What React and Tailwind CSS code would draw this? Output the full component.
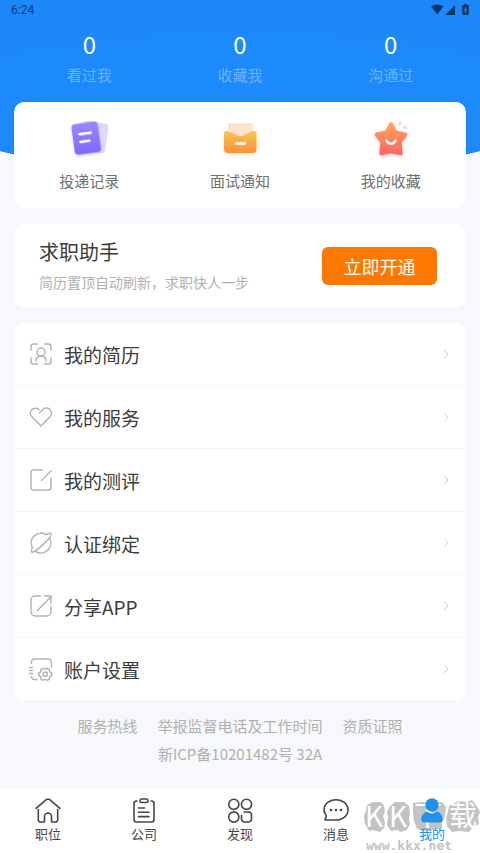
const stats = [
  { label: "看过我", value: 0 },
  { label: "收藏我", value: 0 },
  { label: "沟通过", value: 0 },
];

function RecordIcon() {
  return (
    <svg width="48" height="48" viewBox="0 0 48 48" fill="none">
      <defs>
        <linearGradient id="record" x1="0" y1="0" x2="0" y2="1">
          <stop offset="0" stopColor="#9b86ff" />
          <stop offset="1" stopColor="#7d6bfb" />
        </linearGradient>
        <filter id="recordShadow" x="-30%" y="-30%" width="160%" height="160%">
          <feDropShadow dx="0" dy="1.5" stdDeviation="1.5" floodColor="#8b78ff" floodOpacity="0.3" />
        </filter>
      </defs>
      <rect x="17" y="8" width="25" height="30" rx="4" fill="#dfd9ff" transform="rotate(8 28 24)" />
      <g transform="rotate(-8 22 24)" filter="url(#recordShadow)">
        <rect x="8" y="8.5" width="26.5" height="31" rx="4" fill="url(#record)" />
        <path d="M15 19.2h11.5M15 27h9" stroke="#fff" strokeWidth="2.4" strokeLinecap="round" />
      </g>
    </svg>
  );
}

function NoticeIcon() {
  return (
    <svg width="48" height="48" viewBox="0 0 48 48" fill="none">
      <defs>
        <linearGradient id="notice" x1="0" y1="0" x2="0" y2="1">
          <stop offset="0" stopColor="#fbc452" />
          <stop offset="1" stopColor="#f5943a" />
        </linearGradient>
        <filter id="noticeShadow" x="-30%" y="-30%" width="160%" height="160%">
          <feDropShadow dx="0" dy="1.5" stdDeviation="1.5" floodColor="#f5943a" floodOpacity="0.3" />
        </filter>
      </defs>
      <rect x="12" y="9" width="25" height="24" rx="2.5" fill="#fde3ca" />
      <path
        d="M8 19.700c0-2.200 1.800-3.200 3.700-2.400L22 21.500q2.500 1 5 0l9.800-4.200c1.900-.8 3.700.2 3.700 2.400V35a4 4 0 0 1-4 4H12a4 4 0 0 1-4-4z"
        fill="url(#notice)"
        filter="url(#noticeShadow)"
      />
      <path d="M20.500 29.500h8.500" stroke="#fff" strokeWidth="2.400" strokeLinecap="round" />
    </svg>
  );
}

function StarIcon() {
  return (
    <svg width="48" height="48" viewBox="0 0 48 48" fill="none">
      <defs>
        <linearGradient id="star" x1="0" y1="0" x2="0" y2="1">
          <stop offset="0" stopColor="#ffa95f" />
          <stop offset="1" stopColor="#ff6464" />
        </linearGradient>
        <filter id="starShadow" x="-30%" y="-30%" width="160%" height="160%">
          <feDropShadow dx="0" dy="1.5" stdDeviation="1.5" floodColor="#ff7a62" floodOpacity="0.3" />
        </filter>
      </defs>
      <path
        d="M22.300 9c.8-1.500 2.600-1.500 3.400 0l3.900 7.600 9.100 1.900c1.700.4 2.300 2.200 1.200 3.500l-5.100 6.600.9 10.300c.1 1.900-1.800 2.900-3.500 2.100L24 39.500 15.800 41c-1.700.8-3.600-.2-3.500-2.100l.9-10.300L8.100 22c-1.100-1.300-.5-3.100 1.200-3.500l9.100-1.900z"
        fill="url(#star)"
        filter="url(#starShadow)"
      />
      <path d="M19.500 26.500c2 4.300 7 4.300 9 0" stroke="#fff" strokeWidth="2.400" strokeLinecap="round" />
      <ellipse cx="33" cy="9.500" rx="1.700" ry="2.400" fill="#ffd8c8" transform="rotate(12 33 9.500)" />
      <ellipse cx="38" cy="13.500" rx="2.400" ry="1.600" fill="#ffd8c8" transform="rotate(15 38 13.500)" />
    </svg>
  );
}

const shortcuts = [
  { label: "投递记录", icon: <RecordIcon /> },
  { label: "面试通知", icon: <NoticeIcon /> },
  { label: "我的收藏", icon: <StarIcon /> },
];

const menu = [
  {
    label: "我的简历",
    icon: (
      <>
        <path d="M8.500 2H4.500A2.500 2.500 0 0 0 2 4.500V8M15.500 2h4A2.500 2.500 0 0 1 22 4.500V8M2 16v3.500A2.500 2.500 0 0 0 4.500 22h4M22 16v3.500a2.500 2.500 0 0 1-2.500 2.500h-4" />
        <circle cx="12" cy="10" r="4" />
        <path d="M6.800 18.800c.5-3 2.500-4.800 5.200-4.800s4.700 1.800 5.200 4.800" />
      </>
    ),
  },
  {
    label: "我的服务",
    icon: (
      <path d="M10.500 7.700 14 4.300c2-1.800 5.600-1.500 7.300.4 1.800 2.100 1.700 5.100-.3 7.100L12 21l-9.100-9.200C1 9.800.9 6.800 2.800 4.700 4.700 2.800 8 2.700 10 4.500" />
    ),
  },
  {
    label: "我的测评",
    icon: (
      <>
        <path d="M13.500 2h-9A2.500 2.500 0 0 0 2 4.500v15A2.500 2.500 0 0 0 4.500 22h15a2.500 2.500 0 0 0 2.500-2.500V10" />
        <path d="M12.500 12.500 22 3" />
      </>
    ),
  },
  {
    label: "认证绑定",
    icon: (
      <>
        <path d="M17.500 3.700A9.900 9.900 0 0 0 3.300 16.500M20.600 7.300A9.900 9.900 0 0 1 6.800 20.500" />
        <path d="M17.500 3.700c2.200-1.500 3.800-2 4.300-1.300 1.200 1.500-2.800 6.600-8 11.500-5.300 4.900-10.200 8.300-11.300 7.100-.5-.6 0-2.200.8-4.500" />
      </>
    ),
  },
  {
    label: "分享APP",
    icon: (
      <>
        <path d="M11.500 2H6a4 4 0 0 0-4 4v12a4 4 0 0 0 4 4h12a4 4 0 0 0 4-4v-5.500" />
        <path d="M8.500 16.500 22 2.500M15.500 2H22v7" />
      </>
    ),
  },
  {
    label: "账户设置",
    icon: (
      <>
        <path d="M2.500 6.500V5a3 3 0 0 1 3-3H19a3.500 3.500 0 0 1 3.500 3.500V10M2.500 19.500a3 3 0 0 0 3 3H8M.5 10.500h3M.5 13.500h3M.5 16.500h3" />
        <path d="m14.300 11.300 1.200.7h1.500l1.300-.9 2.200 1.300-.1 1.600.8 1.300 1.500.7v2.500l-1.500.7-.8 1.300.1 1.600-2.200 1.300-1.300-.9h-1.600l-1.300.9-2.200-1.300.1-1.600-.8-1.300-1.500-.7V16l1.500-.7.8-1.300-.1-1.600z" />
        <circle cx="16.200" cy="17.200" r="2.300" />
      </>
    ),
  },
];

const tabs = [
  {
    label: "职位",
    icon: (
      <>
        <path d="M2 11.300 12.300 2.700a2.600 2.600 0 0 1 3.400 0L26 11.300" />
        <path d="M4.300 12.500v10.200a2.300 2.300 0 0 0 2.300 2.300h3.900v-5.500a3.500 3.500 0 0 1 7 0V25h3.900a2.300 2.300 0 0 0 2.300-2.300V12.500" />
      </>
    ),
  },
  {
    label: "公司",
    icon: (
      <>
        <path d="M7 4h-.5A2.500 2.500 0 0 0 4 6.500v16A2.500 2.500 0 0 0 6.500 25h15a2.500 2.500 0 0 0 2.500-2.500v-16A2.500 2.500 0 0 0 21.500 4H21" />
        <rect x="10" y="2" width="8" height="3.500" rx="1.500" />
        <path d="M8.500 11h6M8.500 15.300h10.500M8.500 19.600h10.500" />
      </>
    ),
  },
  {
    label: "发现",
    icon: (
      <>
        <circle cx="7.800" cy="7.300" r="5.100" />
        <circle cx="20.500" cy="7.300" r="5.100" />
        <circle cx="7.800" cy="20" r="5.100" />
        <path d="M18 15h4.500a3 3 0 0 1 3 3v4a3 3 0 0 1-3 3h-4a3 3 0 0 1-3-3v-3.500" />
      </>
    ),
  },
  {
    label: "消息",
    icon: (
      <>
        <path d="M4.200 18.500A10.500 10.500 0 0 1 2 12.600C2 7 7.200 2.700 14 2.700S26 7 26 12.800 20.800 23 14 23H3.700c-.8 0-1-.8-.5-1.300.9-1 1.400-2 1-3.200z" />
        <path d="M9 13h.01M14 13h.01M19 13h.01" strokeWidth="2.600" />
      </>
    ),
  },
  {
    label: "我的",
    active: true,
    icon: (
      <g fill="#1e93ee" stroke="none">
        <circle cx="14" cy="8" r="6.700" />
        <path d="M9 14.500a8 8 0 0 0 10.300 0c3.300 1.300 5.400 4.300 5.400 7.800 0 2.200-1 3.200-3 3.200H6.300c-2 0-3-1-3-3.200 0-3.500 2.200-6.500 5.700-7.800z" />
      </g>
    ),
  },
];

function StatusBar() {
  return (
    <div className="flex h-5 items-center justify-between px-[11px] text-[#0c3a6e]">
      <span className="font-[Roboto] text-xs">6:24</span>
      <svg width="38" height="12" viewBox="0 0 38 12" fill="currentColor">
        <path d="M0 2.500C3.500-.3 9-.3 12.500 2.500L6.300 10.500z" />
        <path d="M14 11h10V1z" />
        <path
          fillRule="evenodd"
          d="M32 1h1V0h3v1h1q.8 0 .8.800v8.400q0 .8-.8.800h-5q-.8 0-.8-.800V1.800q0-.8.800-.8zm3 1.500-2.200 4h1.400V9.500l2-4h-1.200z"
        />
      </svg>
    </div>
  );
}

function Watermark() {
  return (
    <div className="pointer-events-none absolute right-0 bottom-0">
      <svg width="118" height="64" viewBox="0 -8 118 64">
        <g fill="#c3c3c3">
          <path d="M5 8l6-3 8 0 3 4 1 6-2 4 2 6-1 6-4 4-7-2-4 1-4-7-1-8 2-5z" />
          <path d="M28 9l5-4 9 0 5 4 1 8-1 4 1 6-3 6-6 2-4-2-6 1-4-6 1-8-1-5z" />
          <path d="M51 6l9-1 12 1 8-1 4 5-1 9-3 7 0 5-8 2-8 1-9-2-3-8-1-9z" />
          <path d="M87 9l6-3 3-2 9 1 5-2 4 5 4 7-2 5 1 7-6 3-4 5-10-1-7 1-5-6-1-9 2-5z" />
        </g>
        <g fill="#fff" fontFamily="'Noto Sans CJK SC', sans-serif">
          <text x="3" y="30" fontSize="28">K</text>
          <text x="27" y="30" fontSize="28">K</text>
          <text x="52" y="29" fontSize="28">下</text>
          <text x="87" y="29" fontSize="28">载</text>
        </g>
        <text
          x="4"
          y="53"
          fill="#c3c3c3"
          fontFamily="'DejaVu Sans Mono', monospace"
          fontSize="13"
          fontWeight="700"
        >
          www.kkx.net
        </text>
      </svg>
    </div>
  );
}

export default function App() {
  return (
    <div className="relative isolate flex min-h-screen flex-col bg-[#f7f8fb] font-['Noto_Sans_CJK_SC',sans-serif]">
      {/* Curved header background */}
      <svg
        className="absolute inset-x-0 top-0 -z-10 w-full"
        height="170"
        viewBox="0 0 480 170"
        preserveAspectRatio="none"
      >
        <path d="M0 0h480v151q-240 60-480 0z" fill="#1c88fa" />
        <path d="M0 57q240-48 480 0v94q-240 60-480 0z" fill="#1d8afb" />
      </svg>

      <StatusBar />

      <main className="flex flex-1 flex-col gap-4 px-[14px]">
        <div>
          <dl className="grid h-[82px] grid-cols-3 pt-2 text-center">
            {stats.map(({ label, value }) => (
              <div key={label} className="flex flex-col-reverse justify-end gap-[3px]">
                <dt className="text-[15px] leading-6 text-[#6db2fd]">{label}</dt>
                <dd className="text-2xl leading-8 text-white">{value}</dd>
              </div>
            ))}
          </dl>

          <div className="grid h-[106px] grid-cols-3 rounded-[10px] bg-white">
            {shortcuts.map(({ label, icon }) => (
              <button key={label} className="flex flex-col items-center pt-3">
                {icon}
                <span className="mt-[7px] text-[15px] leading-6 text-[#707070]">{label}</span>
              </button>
            ))}
          </div>
        </div>

        <section className="flex h-[83px] items-center justify-between rounded-[10px] bg-white pr-[29px] pl-[25px]">
          <div>
            <h2 className="text-xl leading-8 text-[#3c3c3c]">求职助手</h2>
            <p className="text-sm leading-7 text-[#b0b0b0]">简历置顶自动刷新，求职快人一步</p>
          </div>
          <button className="h-[38px] w-[115px] rounded-md bg-[#ff7800] text-lg leading-6 text-white">
            立即开通
          </button>
        </section>

        <ul className="divide-y divide-[#f7f7f8] rounded-[10px] bg-white">
          {menu.map(({ label, icon }) => (
            <li key={label}>
              <a href="#" className="flex h-[62px] items-center gap-[11px] pr-4 pl-[15px]">
                <svg
                  width="24"
                  height="24"
                  viewBox="0 0 24 24"
                  fill="none"
                  stroke="#b4b4b4"
                  strokeWidth="1.5"
                  strokeLinecap="round"
                  strokeLinejoin="round"
                >
                  {icon}
                </svg>
                <span className="flex-1 pt-0.5 text-[19px] leading-7 text-[#3c3c3c]">{label}</span>
                <svg width="8" height="10" viewBox="0 0 8 10" fill="none" stroke="#cfcfcf">
                  <path d="M2 1l4 4-4 4" />
                </svg>
              </a>
            </li>
          ))}
        </ul>

        <footer className="-mt-1 text-center text-[15px] leading-7 text-[#b0b0b0]">
          <div className="flex justify-center gap-5">
            <a href="#">服务热线</a>
            <a href="#">举报监督电话及工作时间</a>
            <a href="#">资质证照</a>
          </div>
          <p>新ICP备10201482号 32A</p>
        </footer>
      </main>

      <nav className="relative grid h-16 grid-cols-5 bg-white">
        <Watermark />
        {tabs.map(({ label, icon, active }) => (
          <a
            key={label}
            href="#"
            className={`relative flex flex-col items-center pt-2 ${active ? "text-[#1296f3]" : "text-[#42474e]"}`}
          >
            <svg
              width="28"
              height="28"
              viewBox="0 0 28 28"
              fill="none"
              stroke="currentColor"
              strokeWidth="1.6"
              strokeLinecap="round"
              strokeLinejoin="round"
            >
              {icon}
            </svg>
            <span className="text-[13px] leading-[18px]">{label}</span>
          </a>
        ))}
      </nav>
    </div>
  );
}
